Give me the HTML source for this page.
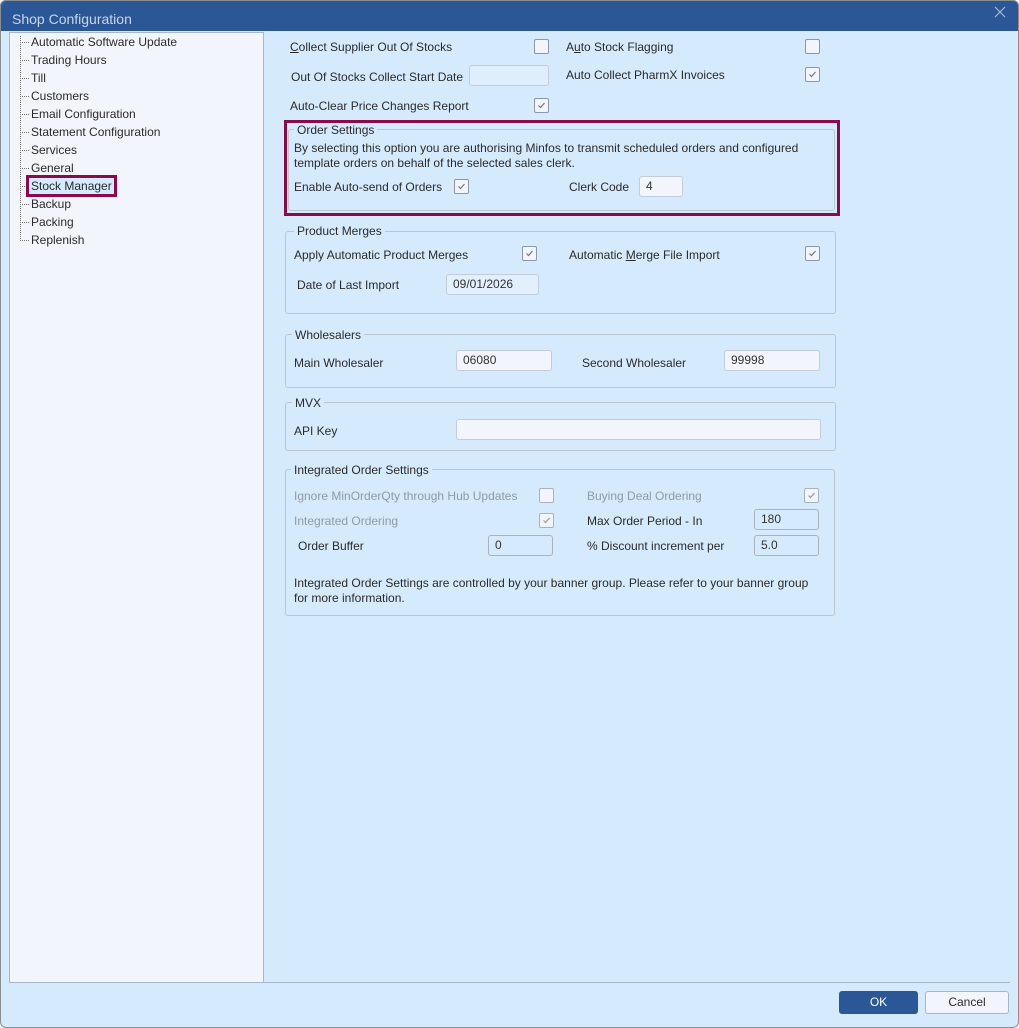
<!DOCTYPE html>
<html><head><meta charset="utf-8"><style>
*{box-sizing:border-box;margin:0;padding:0}
body{width:1019px;height:1028px;background:#fff;font-family:"Liberation Sans",sans-serif;font-size:12px;color:#2b2b2b;position:relative;overflow:hidden}
.win{position:absolute;left:0;top:0;width:1019px;height:1028px;background:#d5eafd;border-radius:6px;overflow:hidden}
.frame{position:absolute;left:0;top:0;width:1019px;height:1028px;border:1px solid #8a8f96;border-radius:6px;pointer-events:none}
.title{position:absolute;left:0;top:0;width:1019px;height:31px;background:#2b5797}
.t{position:absolute;white-space:nowrap;line-height:14px;font-size:12px}
.g{color:#8f9aa6}
.cb{position:absolute;width:15px;height:15px;border:1px solid #8b97a8;border-radius:2px;background:#f3f5fd}
.cb svg{position:absolute;left:2px;top:2px}
.in{position:absolute;border:1px solid #c3ccd8;border-radius:3px;background:#f3f5fd;height:21px;padding-left:6px;line-height:19px;font-size:12px;color:#333}
.in.d{background:#d5eafd;border-color:#a9b2bd}
.gb{position:absolute;border:1px solid #bcc6d0;border-radius:3px}
.lg{position:absolute;background:#d5eafd;padding:0 3px;line-height:14px;white-space:nowrap}
.hl{position:absolute;border:3px solid #8b0a4a}
</style></head><body>
<div class="win">
<div class="title"></div>
<div class="t" style="left:12px;top:11px;font-size:14px;line-height:16px;color:#c7d5ee">Shop Configuration</div>
<svg style="position:absolute;left:994px;top:6px" width="12" height="12"><path d="M1 1L11 11M11 1L1 11" stroke="#a9b8d6" stroke-width="1.2"/></svg>

<div style="position:absolute;left:9px;top:32px;width:255px;height:951px;background:#f3f5fd;border:1px solid #a6b7c9"></div>
<svg style="position:absolute;left:0;top:0" width="40" height="260"><g stroke="#777" stroke-dasharray="1 1" stroke-width="1">
<path d="M20.5 36V240"/>
<path d="M20 42.5H29M20 60.5H29M20 78.5H29M20 96.5H29M20 114.5H29M20 132.5H29M20 150.5H29M20 168.5H29M20 186.5H29M20 204.5H29M20 222.5H29M20 240.5H29"/></g></svg>
<div class="t" style="left:31px;top:35px">Automatic Software Update</div>
<div class="t" style="left:31px;top:53px">Trading Hours</div>
<div class="t" style="left:31px;top:71px">Till</div>
<div class="t" style="left:31px;top:89px">Customers</div>
<div class="t" style="left:31px;top:107px">Email Configuration</div>
<div class="t" style="left:31px;top:125px">Statement Configuration</div>
<div class="t" style="left:31px;top:143px">Services</div>
<div class="t" style="left:31px;top:161px">General</div>
<div class="hl" style="left:26px;top:175px;width:91px;height:22px;background:#d5eafd"></div>
<div class="t" style="left:31px;top:179px">Stock Manager</div>
<div class="t" style="left:31px;top:197px">Backup</div>
<div class="t" style="left:31px;top:215px">Packing</div>
<div class="t" style="left:31px;top:233px">Replenish</div>

<div style="position:absolute;left:9px;top:982px;width:1001px;height:1px;background:#a6b7c9"></div>
<div style="position:absolute;left:839px;top:991px;width:79px;height:23px;background:#2b5797;border-radius:3px;color:#fff;text-align:center;line-height:22px">OK</div>
<div style="position:absolute;left:925px;top:991px;width:84px;height:23px;background:#f3f5fd;border:1px solid #a9b6c6;border-radius:3px;text-align:center;line-height:21px">Cancel</div>

<div class="t" style="left:290px;top:40px"><u>C</u>ollect Supplier Out Of Stocks</div>
<div class="cb" style="left:534px;top:39px"></div>
<div class="t" style="left:291px;top:70px">Out Of Stocks Collect Start Date</div>
<div class="in d" style="left:469px;top:65px;width:80px;background:#deeefc;border-color:#c3ccd8"></div>
<div class="t" style="left:290px;top:99px">Auto-Clear Price Changes Report</div>
<div class="cb" style="left:534px;top:98px"><svg width="9" height="9"><path d="M1.5 4.5L3.5 6.5L7.5 2" fill="none" stroke="#777" stroke-width="1.2"/></svg></div>
<div class="t" style="left:566px;top:40px">A<u>u</u>to Stock Flagging</div>
<div class="cb" style="left:805px;top:39px"></div>
<div class="t" style="left:566px;top:68px">Auto Collect PharmX Invoices</div>
<div class="cb" style="left:805px;top:67px"><svg width="9" height="9"><path d="M1.5 4.5L3.5 6.5L7.5 2" fill="none" stroke="#777" stroke-width="1.2"/></svg></div>

<div class="hl" style="left:284px;top:120px;width:556px;height:96px"></div>
<div class="gb" style="left:288px;top:129px;width:547px;height:82px"></div>
<div class="lg" style="left:294px;top:123px">Order Settings</div>
<div class="t" style="left:294px;top:141px">By selecting this option you are authorising Minfos to transmit scheduled orders and configured</div>
<div class="t" style="left:294px;top:156px">template orders on behalf of the selected sales clerk.</div>
<div class="t" style="left:294px;top:180px">Enable Auto-send of Orders</div>
<div class="cb" style="left:454px;top:179px"><svg width="9" height="9"><path d="M1.5 4.5L3.5 6.5L7.5 2" fill="none" stroke="#777" stroke-width="1.2"/></svg></div>
<div class="t" style="left:569px;top:180px">Clerk Code</div>
<div class="in" style="left:639px;top:176px;width:44px">4</div>

<div class="gb" style="left:285px;top:231px;width:551px;height:83px"></div>
<div class="lg" style="left:294px;top:224px">Product Merges</div>
<div class="t" style="left:294px;top:248px">Apply Automatic Product Merges</div>
<div class="cb" style="left:522px;top:246px"><svg width="9" height="9"><path d="M1.5 4.5L3.5 6.5L7.5 2" fill="none" stroke="#777" stroke-width="1.2"/></svg></div>
<div class="t" style="left:569px;top:248px">Automatic <u>M</u>erge File Import</div>
<div class="cb" style="left:805px;top:246px"><svg width="9" height="9"><path d="M1.5 4.5L3.5 6.5L7.5 2" fill="none" stroke="#777" stroke-width="1.2"/></svg></div>
<div class="t" style="left:297px;top:278px">Date of Last Import</div>
<div class="in" style="left:446px;top:274px;width:93px;background:#e2f0fd">09/01/2026</div>

<div class="gb" style="left:285px;top:334px;width:551px;height:54px"></div>
<div class="lg" style="left:292px;top:328px">Wholesalers</div>
<div class="t" style="left:294px;top:356px">Main Wholesaler</div>
<div class="in" style="left:456px;top:350px;width:96px">06080</div>
<div class="t" style="left:582px;top:356px">Second Wholesaler</div>
<div class="in" style="left:724px;top:350px;width:96px">99998</div>

<div class="gb" style="left:285px;top:402px;width:551px;height:49px"></div>
<div class="lg" style="left:292px;top:396px">MVX</div>
<div class="t" style="left:294px;top:424px">API Key</div>
<div class="in" style="left:456px;top:419px;width:365px"></div>

<div class="gb" style="left:285px;top:469px;width:550px;height:147px"></div>
<div class="lg" style="left:291px;top:463px">Integrated Order Settings</div>
<div class="t g" style="left:294px;top:489px">Ignore MinOrderQty through Hub Updates</div>
<div class="cb" style="left:539px;top:488px;border-color:#a8b2be"></div>
<div class="t g" style="left:587px;top:489px">Buying Deal Ordering</div>
<div class="cb" style="left:804px;top:488px;border-color:#a8b2be"><svg width="9" height="9"><path d="M1.5 4.5L3.5 6.5L7.5 2" fill="none" stroke="#999" stroke-width="1.2"/></svg></div>
<div class="t g" style="left:294px;top:514px">Integrated Ordering</div>
<div class="cb" style="left:539px;top:513px;border-color:#a8b2be"><svg width="9" height="9"><path d="M1.5 4.5L3.5 6.5L7.5 2" fill="none" stroke="#999" stroke-width="1.2"/></svg></div>
<div class="t" style="left:587px;top:514px">Max Order Period - In</div>
<div class="in d" style="left:754px;top:509px;width:65px">180</div>
<div class="t" style="left:298px;top:539px">Order Buffer</div>
<div class="in d" style="left:488px;top:535px;width:65px">0</div>
<div class="t" style="left:587px;top:539px">% Discount increment per</div>
<div class="in d" style="left:754px;top:535px;width:65px">5.0</div>
<div class="t" style="left:294px;top:576px">Integrated Order Settings are controlled by your banner group. Please refer to your banner group</div>
<div class="t" style="left:294px;top:591px">for more information.</div>
</div>
<div class="frame"></div>
</body></html>
